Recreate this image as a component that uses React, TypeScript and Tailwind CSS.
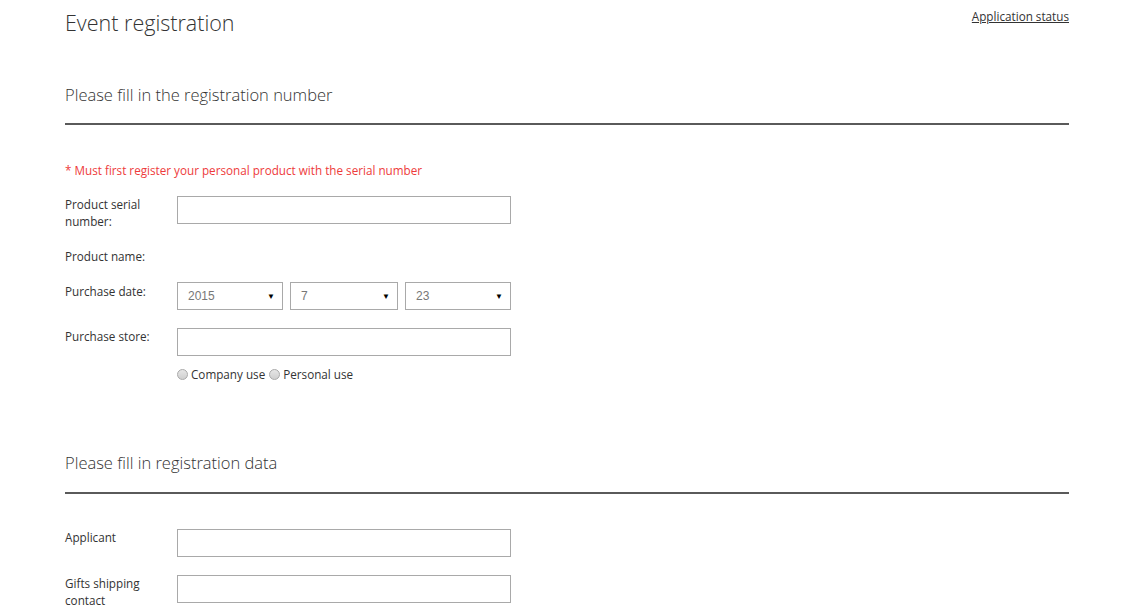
import React from "react";

const font = { fontFamily: '"Open Sans", "Noto Sans", sans-serif' };

function Radio({ label }: { label: string }) {
  return (
    <span className="inline-flex items-center">
      <span className="inline-block w-[11px] h-[11px] rounded-full border border-[#a9a9a9] bg-gradient-to-b from-[#e6e6e6] to-[#cfcfcf] mr-[3px]" />
      <span>{label}</span>
    </span>
  );
}

function Select({ value, w }: { value: string; w: string }) {
  return (
    <div className={`${w} h-[28px] border border-[#a9a9a9] flex items-center justify-between pl-[10px] pr-[7px]`}>
      <span className="text-[12px] text-[#777]" style={{ fontFamily: '"Liberation Sans", Arial, sans-serif' }}>{value}</span>
      <span className="text-[8px] text-black leading-none">▼</span>
    </div>
  );
}

function Input() {
  return <div className="w-[334px] h-[28px] border border-[#a9a9a9] bg-white" />;
}

export default function App() {
  return (
    <div className="w-[1130px] h-[605px] bg-white overflow-hidden text-[#333]" style={font}>
      <div className="ml-[65px] w-[1004px]">
        <div className="flex justify-between items-start">
          <h1 className="text-[21.5px] font-light leading-[28px] mt-[9px] text-[#333]">Event registration</h1>
          <a className="text-[11.7px] underline leading-[16px] mt-[8px] text-[#333]">Application status</a>
        </div>

        <h2 className="text-[16.5px] font-light leading-[22px] mt-[47px] text-[#333]">Please fill in the registration number</h2>
        <div className="h-[2px] bg-[#5a5a5a] mt-[17px]" />

        <p className="text-[11.7px] leading-[16px] text-[#ee3b3b] mt-[37px]">* Must first register your personal product with the serial number</p>

        <div className="flex mt-[18px] text-[11.7px] leading-[17px]">
          <div className="w-[112px] pr-2">Product serial<br />number:</div>
          <Input />
        </div>

        <div className="flex mt-[18px] text-[11.7px] leading-[17px]">
          <div className="w-[112px]">Product name:</div>
        </div>

        <div className="flex mt-[17px] text-[11.7px] leading-[17px]">
          <div className="w-[112px] pt-[1px]">Purchase date:</div>
          <div className="flex gap-[7px]">
            <Select value="2015" w="w-[106px]" />
            <Select value="7" w="w-[108px]" />
            <Select value="23" w="w-[106px]" />
          </div>
        </div>

        <div className="flex mt-[18px] text-[11.7px] leading-[17px]">
          <div className="w-[112px]">Purchase store:</div>
          <Input />
        </div>

        <div className="flex mt-[10px] text-[11.7px] leading-[17px] ml-[112px] gap-[4px]">
          <Radio label="Company use" />
          <Radio label="Personal use" />
        </div>

        <h2 className="text-[16.5px] font-light leading-[22px] mt-[69px] text-[#333]">Please fill in registration data</h2>
        <div className="h-[2px] bg-[#5a5a5a] mt-[18px]" />

        <div className="flex mt-[35px] text-[11.7px] leading-[17px]">
          <div className="w-[112px]">Applicant</div>
          <Input />
        </div>

        <div className="flex mt-[18px] text-[11.7px] leading-[17px]">
          <div className="w-[112px]">Gifts shipping<br />contact</div>
          <Input />
        </div>
      </div>
    </div>
  );
}
